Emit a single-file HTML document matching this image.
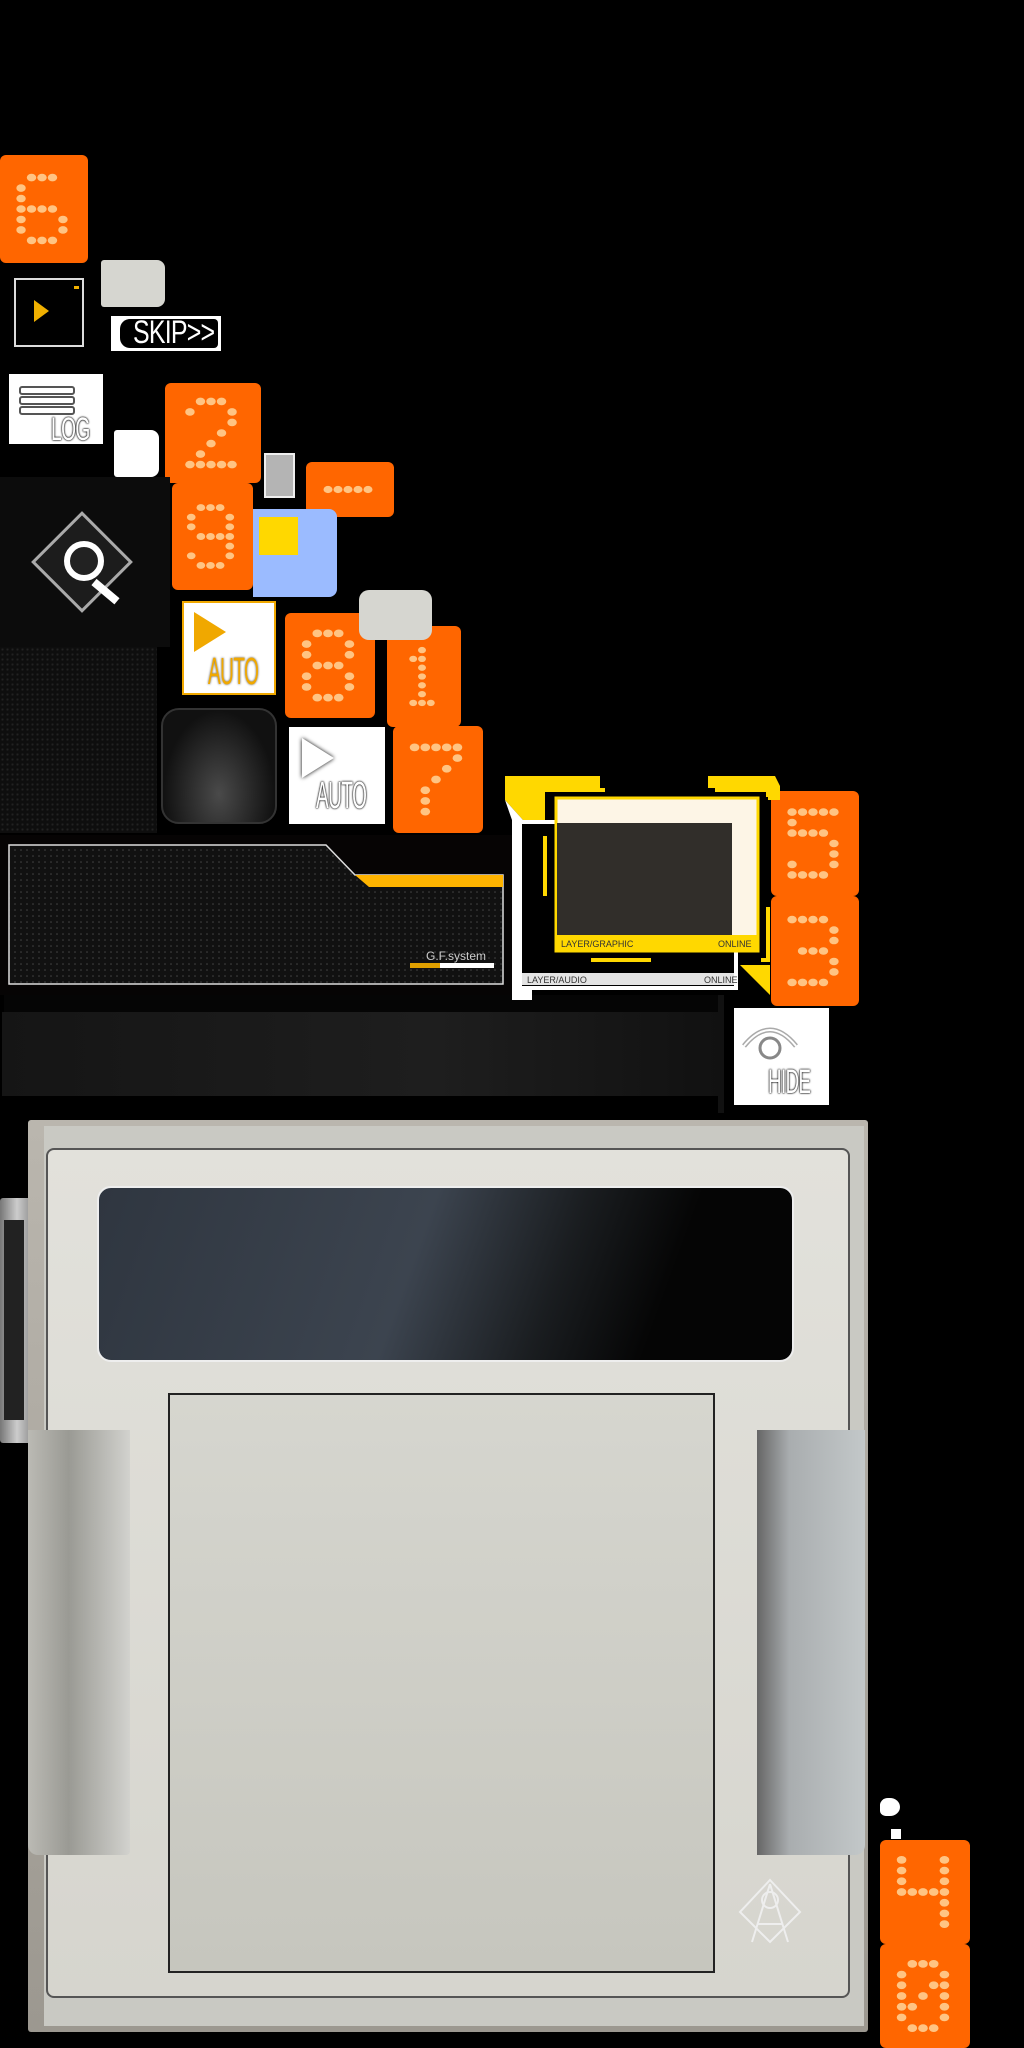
<!DOCTYPE html>
<html><head><meta charset="utf-8"><style>
html,body{margin:0;padding:0;background:#000;width:1024px;height:2048px;overflow:hidden;position:relative;font-family:"Liberation Sans",sans-serif}
.a{position:absolute}
.or{background:#ff6600;border-radius:6px}
.t{font-family:"Liberation Sans",sans-serif;font-weight:normal;transform:scaleX(.6);transform-origin:left top;letter-spacing:-1px}
</style></head><body>
<div id="tiles"></div>

<!-- play box -->
<div class="a" style="left:14px;top:278px;width:70px;height:69px;border:2px solid #ddd;box-sizing:border-box;background:#000"></div>
<div class="a" style="left:34px;top:300px;width:0;height:0;border-left:15px solid #f0b000;border-top:11px solid transparent;border-bottom:11px solid transparent"></div>
<div class="a" style="left:74px;top:286px;width:5px;height:3px;background:#f0b000"></div>
<div class="a" style="left:101px;top:260px;width:64px;height:47px;background:#d6d6d0;border-radius:3px 8px 8px 3px"></div>
<!-- SKIP -->
<div class="a" style="left:111px;top:316px;width:110px;height:35px;background:#fff"></div>
<div class="a" style="left:120px;top:319px;width:98px;height:29px;background:#000;border-radius:10px 4px 4px 10px"></div>
<div class="a t" style="left:133px;top:315px;color:#fff;font-size:32px;line-height:34px;transform:scaleX(.78)">SKIP&gt;&gt;</div>
<!-- LOG -->
<div class="a" style="left:9px;top:374px;width:94px;height:70px;background:#fff"></div>
<div class="a" style="left:19px;top:386px;width:52px;height:5px;border:2px solid #555;border-radius:3px"></div>
<div class="a" style="left:19px;top:396px;width:52px;height:5px;border:2px solid #555;border-radius:3px"></div>
<div class="a" style="left:19px;top:406px;width:52px;height:5px;border:2px solid #555;border-radius:3px"></div>
<div class="a t" style="left:51px;top:412px;color:#fff;font-size:32px;line-height:34px;text-shadow:0 0 2px #000,0 0 3px #000">LOG</div>
<div class="a" style="left:114px;top:430px;width:45px;height:47px;background:#fff;border-radius:3px 8px 8px 3px"></div>
<!-- search panel -->
<div class="a" style="left:0;top:477px;width:170px;height:170px;background:#0c0c0c"></div>
<div class="a" style="left:46px;top:526px;width:72px;height:72px;transform:rotate(45deg);border:3px solid #aaa;background:#1c1c1c;box-sizing:border-box"></div>
<div class="a" style="left:64px;top:541px;width:28px;height:28px;border:6px solid #fff;border-radius:50%;background:#222"></div>
<div class="a" style="left:94px;top:578px;width:30px;height:8px;background:#fff;transform:rotate(40deg);transform-origin:left center"></div>
<div class="a" style="left:0;top:647px;width:157px;height:186px;background:#0e0e0e;background-image:radial-gradient(#222 1px,transparent 1.2px);background-size:5px 5px"></div>
<!-- misc -->
<div class="a" style="left:264px;top:453px;width:31px;height:45px;background:#b4b4b4;border:2px solid #eee;box-sizing:border-box"></div>
<div class="a" style="left:253px;top:509px;width:84px;height:88px;background:#9bbbff;border-radius:0 8px 8px 0"></div>
<div class="a" style="left:259px;top:517px;width:39px;height:38px;background:#ffd800"></div>
<!-- AUTO yellow -->
<div class="a" style="left:182px;top:601px;width:94px;height:94px;background:#fff;border:2px solid #f0a800;box-sizing:border-box"></div>
<div class="a" style="left:194px;top:612px;width:0;height:0;border-left:32px solid #f0a800;border-top:20px solid transparent;border-bottom:20px solid transparent"></div>
<div class="a t" style="left:208px;top:652px;color:#f0a800;font-size:38px;line-height:40px;transform:scaleX(.5);text-shadow:0 0 3px #555">AUTO</div>
<div class="a" style="left:359px;top:590px;width:73px;height:50px;background:#d6d6d0;border-radius:10px"></div>
<!-- dark button -->
<div class="a" style="left:161px;top:708px;width:116px;height:116px;border-radius:18px;background:radial-gradient(ellipse at 50% 75%,#4a4a4a,#111 70%);border:2px solid #333;box-sizing:border-box"></div>
<!-- AUTO white -->
<div class="a" style="left:289px;top:727px;width:96px;height:97px;background:#fff"></div>
<div class="a" style="left:302px;top:738px;width:0;height:0;border-left:32px solid #fff;border-top:20px solid transparent;border-bottom:20px solid transparent;filter:drop-shadow(0 0 2px #000)"></div>
<div class="a t" style="left:316px;top:776px;color:#fff;font-size:38px;line-height:40px;transform:scaleX(.5);text-shadow:0 0 2px #000,0 0 3px #000">AUTO</div>
<!-- GF panel -->
<div class="a" style="left:0;top:835px;width:520px;height:160px;background:#060404"></div>
<svg class="a" style="left:0;top:835px" width="520" height="170">
<defs><pattern id="dp" width="6" height="6" patternUnits="userSpaceOnUse"><circle cx="3" cy="3" r="0.8" fill="#444"/></pattern></defs>
<polygon points="9,10 326,10 355,40 503,40 503,149 9,149" fill="#111"/>
<polygon points="9,10 326,10 355,40 503,40 503,149 9,149" fill="url(#dp)" stroke="#ddd" stroke-width="1.5"/>
<polygon points="355,40 503,40 503,52 369,52" fill="#ffb400"/>
<rect x="410" y="128" width="30" height="5" fill="#e0a000"/><rect x="440" y="128" width="54" height="5" fill="#fff"/>
<text x="426" y="125" font-family="Liberation Sans" font-size="12" fill="#ccc">G.F.system</text>
</svg>
<div class="a" style="left:4px;top:995px;width:716px;height:17px;background:#050505"></div>
<div class="a" style="left:2px;top:1012px;width:718px;height:84px;background:linear-gradient(90deg,#151515,#1e1e1e 60%,#111)"></div>
<div class="a" style="left:718px;top:995px;width:6px;height:118px;background:#111"></div>
<!-- layer frame -->
<svg class="a" style="left:500px;top:770px" width="280" height="240">
<polygon points="5,6 100,6 100,18 45,18 45,90 32,90 32,60 5,30" fill="#ffd800"/>
<polygon points="5,30 32,60 32,230 12,230 12,50" fill="#fff"/>
<polygon points="208,6 275,6 280,16 280,30 268,30 268,18 208,18" fill="#ffd800"/>
<rect x="45" y="18" width="223" height="172" fill="#000"/>
<rect x="18" y="50" width="220" height="170" fill="#fff"/>
<rect x="22" y="54" width="212" height="162" fill="#000"/>
<rect x="22" y="203" width="212" height="12" fill="#e4e4e4"/>
<text x="27" y="213" font-size="9" font-family="Liberation Sans" fill="#333">LAYER/AUDIO</text>
<text x="204" y="213" font-size="9" font-family="Liberation Sans" fill="#333">ONLINE</text>
<rect x="45" y="20" width="223" height="170" fill="none" stroke="#ffd800" stroke-width="4" stroke-dasharray="60 110"/>
<rect x="56" y="28" width="202" height="153" fill="#fdf5e6" stroke="#ffd800" stroke-width="3"/>
<rect x="57" y="53" width="175" height="112" fill="#312e2a"/>
<rect x="56" y="165" width="202" height="16" fill="#ffd800"/>
<text x="61" y="177" font-size="9" font-family="Liberation Sans" fill="#333">LAYER/GRAPHIC</text>
<text x="218" y="177" font-size="9" font-family="Liberation Sans" fill="#333">ONLINE</text>
<polygon points="240,195 270,225 270,195" fill="#ffd800"/>
</svg>
<!-- HIDE -->
<div class="a" style="left:734px;top:1008px;width:95px;height:97px;background:#fff"></div>
<svg class="a" style="left:740px;top:1018px" width="60" height="46"><path d="M4 28 Q30 -4 56 28" fill="none" stroke="#aaa" stroke-width="5"/><path d="M4 28 Q30 -4 56 28" fill="none" stroke="#fff" stroke-width="2"/><circle cx="30" cy="30" r="10" fill="#fff" stroke="#888" stroke-width="3"/></svg>
<div class="a t" style="left:768px;top:1064px;color:#fff;font-size:34px;line-height:36px;transform:scaleX(.55);text-shadow:0 0 2px #000,0 0 3px #000">HIDE</div>
<!-- device -->
<div class="a" style="left:0;top:1198px;width:34px;height:245px;background:linear-gradient(90deg,#777,#ccc 50%,#888);border-radius:3px"></div>
<div class="a" style="left:4px;top:1220px;width:20px;height:200px;background:#222"></div>
<div class="a" style="left:28px;top:1120px;width:840px;height:912px;border-radius:3px;background:linear-gradient(#bab6ae,#9c9890)"></div>
<div class="a" style="left:44px;top:1126px;width:820px;height:900px;background:#c9c9c3"></div>
<div class="a" style="left:46px;top:1148px;width:804px;height:850px;background:linear-gradient(#e2e1db,#d6d5ce);border:2px solid #555;border-radius:8px;box-sizing:border-box"></div>
<div class="a" style="left:97px;top:1186px;width:697px;height:176px;border-radius:14px;border:2px solid #eee;box-sizing:border-box;background:linear-gradient(110deg,#2f3640 0%,#3c444f 45%,#1a1d20 65%,#050505 80%)"></div>
<div class="a" style="left:168px;top:1393px;width:547px;height:580px;background:linear-gradient(#d6d6cf,#c6c6be);border:2px solid #222;box-sizing:border-box"></div>
<div class="a" style="left:28px;top:1430px;width:102px;height:425px;background:linear-gradient(90deg,#bbbab4,#9a9a94 40%,#d2d2ce);border-radius:0 0 4px 10px"></div>
<div class="a" style="left:757px;top:1430px;width:108px;height:425px;background:linear-gradient(90deg,#666,#a9adaf 30%,#c3c8c9);border-radius:0 0 10px 0"></div>
<svg class="a" style="left:730px;top:1870px" width="80" height="80"><g fill="none" stroke="#eee" stroke-width="2"><path d="M40 10 L70 42 L40 72 L10 42 Z"/><path d="M40 14 L22 72 M40 14 L58 72 M28 54 L52 54"/><circle cx="40" cy="30" r="8"/></g></svg>
<div class="a" style="left:880px;top:1798px;width:20px;height:18px;background:#fff;border-radius:40% 50% 50% 30%"></div>
<div class="a" style="left:891px;top:1829px;width:10px;height:10px;background:#fff"></div>

<script>
var F={'6':[" XXX ","X    ","X    ","XXXX ","X   X","X   X"," XXX "],
'2':[" XXX ","X   X","    X","   X ","  X  "," X   ","XXXXX"],
'9':[" XXX ","X   X","X   X"," XXXX","    X","X   X"," XXX "],
'8':[" XXX ","X   X","X   X"," XXX ","X   X","X   X"," XXX "],
'1':["  X  "," XX  ","  X  ","  X  ","  X  ","  X  "," XXX "],
'7':["XXXXX","    X","   X ","  X  "," X   "," X   "," X   "],
'5':["XXXXX","X    ","XXXX ","    X","    X","X   X","XXXX "],
'3':["XXXX ","    X","    X"," XXX ","    X","    X","XXXX "],
'4':["X   X","X   X","X   X","XXXXX","    X","    X","    X"],
'0':[" XXX ","X   X","X  XX","X X X","XX  X","X   X"," XXX "],
'-':["XXXXX"]};
var T=[[0,155,88,108,'6'],[165,383,96,100,'2'],[172,483,81,107,'9'],[306,462,88,55,'-'],
[285,613,90,105,'8'],[387,626,74,101,'1'],[393,726,90,107,'7'],[771,791,88,105,'5'],[771,896,88,110,'3'],[880,1840,90,104,'4'],[880,1944,90,104,'0']];
var h='';
T.forEach(function(t){var x=t[0],y=t[1],w=t[2],H=t[3],g=F[t[4]];
var rows=g.length,sp=t[4]=='-'?10:Math.min(w/8.4,H/9.5),r=sp*0.36;
var ox=x+(w-4*sp)/2-2,oy=y+(H-(rows-1)*sp)/2;
h+='<div class="a or" style="left:'+x+'px;top:'+y+'px;width:'+w+'px;height:'+H+'px"></div>';
var c='';for(var i=0;i<rows;i++)for(var j=0;j<5;j++)if(g[i][j]=='X')c+='<ellipse cx="'+(ox+j*sp)+'" cy="'+(oy+i*sp)+'" rx="'+(r*1.25)+'" ry="'+r+'" fill="#ffc483"/>';
h+='<svg class="a" style="left:0;top:0" width="1024" height="2048">'+c+'</svg>';});
document.getElementById('tiles').innerHTML=h;
</script>
</body></html>
